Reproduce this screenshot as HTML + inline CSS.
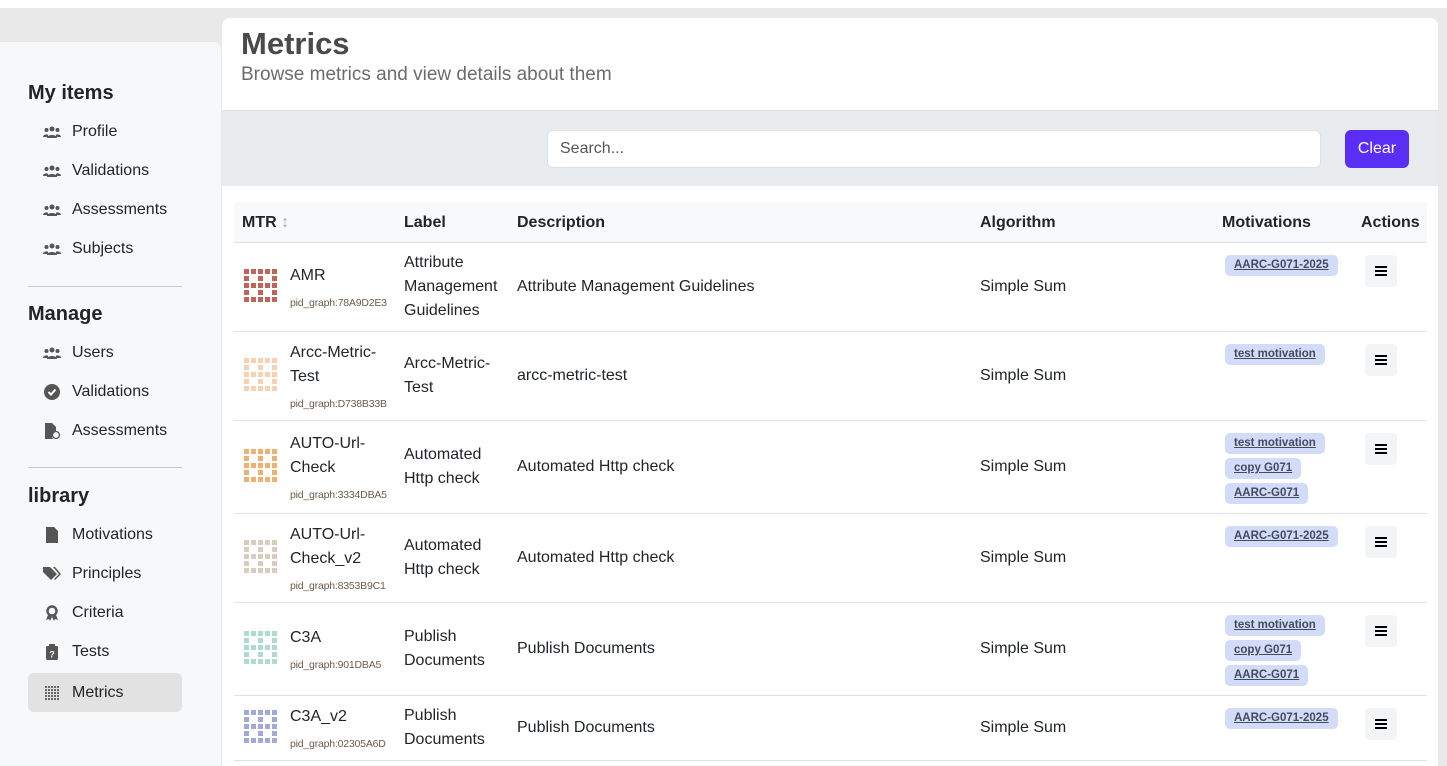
<!DOCTYPE html>
<html><head><meta charset="utf-8"><style>
*{box-sizing:border-box;margin:0;padding:0}
html{width:1447px;height:766px;overflow:hidden}
body{width:1447px;height:766px;overflow:hidden;background:#e9e9e9;font-family:"Liberation Sans","DejaVu Sans",sans-serif;color:#212529;position:relative}
.topw{position:absolute;left:0;top:0;width:1447px;height:8px;background:#fff}
.side{position:absolute;left:0;top:42px;width:221px;height:724px;background:#f7f8fa;border-top-right-radius:8px}
.side h3{position:absolute;left:28px;font-size:20px;font-weight:bold;color:#212529}
.si{position:absolute;left:28px;width:154px;height:39px;display:flex;align-items:center;font-size:16px;color:#212529}
.si .ic{width:44px;display:flex;justify-content:center;padding-left:4px}
.si.act{background:#e2e2e2;border-radius:6px}
.hr{position:absolute;left:28px;width:154px;height:1px;background:#c8c8c8}
.main{position:absolute;left:222px;top:18px;width:1216px;height:748px;background:#fff;border-top-left-radius:8px;border-top-right-radius:8px;overflow:hidden}
.h1{position:absolute;left:19px;top:8px;font-size:31px;font-weight:bold;color:#4a4a4a}
.sub{position:absolute;left:19px;top:46px;font-size:19px;color:#6c6c6c;font-weight:300}
.band{position:absolute;left:0;top:92px;width:1216px;height:76px;background:#e9ecef;border-top:1px solid #dcdfe3}
.search{position:absolute;left:325px;top:19px;width:774px;height:38px;background:#fff;border:1px solid #dee2e6;border-radius:6px;font-size:16px;color:#555;padding:9px 12px}
.clear{position:absolute;left:1123px;top:19px;width:64px;height:38px;background:#5b2ef5;border-radius:6px;color:#fff;font-size:16px;text-align:center;line-height:38px}
.thead{position:absolute;left:12px;top:184px;width:1193px;height:41px;background:#f8f9fa;border-bottom:1px solid #dee2e6;font-weight:bold;font-size:16px}
.thead span{position:absolute;top:12px}
.row{position:absolute;left:12px;width:1193px;border-bottom:1px solid #dee2e6;font-size:16px}
.c{position:absolute;top:0;height:100%;display:flex;align-items:center;line-height:24px}
.nm{left:8px;width:160px}
.nm svg{margin-right:10px;flex:none;margin-left:2px}
.pid{font-size:10.5px;color:#6c5a4a;line-height:14px;margin-top:8px;display:block;letter-spacing:-0.2px}
.lb{left:170px;width:105px}
.ds{left:283px}
.al{left:746px}
.mo{left:991px;top:12px;height:auto;flex-direction:column;align-items:flex-start;display:flex}
.bd{background:#d2dcf8;border-radius:5px;font-size:11.5px;font-weight:bold;color:#444b5e;text-decoration:underline;padding:2px 9px;line-height:17px;margin-bottom:4px}
.ac{position:absolute;left:1131px;top:12px;width:32px;height:32px;background:#f3f4f6;border-radius:4px;display:flex;align-items:center;justify-content:center}
</style></head><body>
<div class="topw"></div>
<div class="side">
<h3 style="top:40px">My items</h3>
<div class="si" style="top:70px"><span class="ic"><svg width="18" height="12" viewBox="0 0 18 12" fill="#555"><circle cx="9" cy="3" r="2.5"/><circle cx="3.5" cy="4" r="2"/><circle cx="14.5" cy="4" r="2"/><path d="M4 12c0-4 10-4 10 0z M0 11c0-3 5-3 5-2v2z M13 9c0-1 5-1 5 2h-5z"/></svg></span>Profile</div>
<div class="si" style="top:109px"><span class="ic"><svg width="18" height="12" viewBox="0 0 18 12" fill="#555"><circle cx="9" cy="3" r="2.5"/><circle cx="3.5" cy="4" r="2"/><circle cx="14.5" cy="4" r="2"/><path d="M4 12c0-4 10-4 10 0z M0 11c0-3 5-3 5-2v2z M13 9c0-1 5-1 5 2h-5z"/></svg></span>Validations</div>
<div class="si" style="top:148px"><span class="ic"><svg width="18" height="12" viewBox="0 0 18 12" fill="#555"><circle cx="9" cy="3" r="2.5"/><circle cx="3.5" cy="4" r="2"/><circle cx="14.5" cy="4" r="2"/><path d="M4 12c0-4 10-4 10 0z M0 11c0-3 5-3 5-2v2z M13 9c0-1 5-1 5 2h-5z"/></svg></span>Assessments</div>
<div class="si" style="top:187px"><span class="ic"><svg width="18" height="12" viewBox="0 0 18 12" fill="#555"><circle cx="9" cy="3" r="2.5"/><circle cx="3.5" cy="4" r="2"/><circle cx="14.5" cy="4" r="2"/><path d="M4 12c0-4 10-4 10 0z M0 11c0-3 5-3 5-2v2z M13 9c0-1 5-1 5 2h-5z"/></svg></span>Subjects</div>
<div class="hr" style="top:244px"></div>
<h3 style="top:261px">Manage</h3>
<div class="si" style="top:291px"><span class="ic"><svg width="18" height="12" viewBox="0 0 18 12" fill="#555"><circle cx="9" cy="3" r="2.5"/><circle cx="3.5" cy="4" r="2"/><circle cx="14.5" cy="4" r="2"/><path d="M4 12c0-4 10-4 10 0z M0 11c0-3 5-3 5-2v2z M13 9c0-1 5-1 5 2h-5z"/></svg></span>Users</div>
<div class="si" style="top:330px"><span class="ic"><svg width="16" height="16" viewBox="0 0 16 16"><circle cx="8" cy="8" r="8" fill="#555"/><path d="M4.5 8l2.5 2.5 4.5-5" stroke="#fff" stroke-width="2" fill="none"/></svg></span>Validations</div>
<div class="si" style="top:369px"><span class="ic"><svg width="16" height="16" viewBox="0 0 16 16" fill="#555"><path d="M1 0h7l4 4v4a5 5 0 0 0-3 8H1z"/><circle cx="12" cy="12" r="3.5" fill="none" stroke="#555" stroke-width="1.3"/></svg></span>Assessments</div>
<div class="hr" style="top:425px"></div>
<h3 style="top:443px">library</h3>
<div class="si" style="top:473px"><span class="ic"><svg width="12" height="16" viewBox="0 0 12 16" fill="#555"><path d="M0 0h8l4 4v12H0z"/></svg></span>Motivations</div>
<div class="si" style="top:512px"><span class="ic"><svg width="18" height="14" viewBox="0 0 18 14" fill="#555"><path d="M0 0h7l7 7-6 6-8-8z M10 0h2l6 7-6 6-1-1 5-5z"/></svg></span>Principles</div>
<div class="si" style="top:551px"><span class="ic"><svg width="14" height="16" viewBox="0 0 14 16"><circle cx="7" cy="6" r="4.5" fill="none" stroke="#555" stroke-width="2.4"/><path d="M3 10l-2 5 3-1 1 2 2-4z M11 10l2 5-3-1-1 2-2-4z" fill="#555"/></svg></span>Criteria</div>
<div class="si" style="top:590px"><span class="ic"><svg width="12" height="16" viewBox="0 0 12 16"><rect x="0" y="2" width="12" height="14" rx="1.5" fill="#555"/><rect x="3" y="0" width="6" height="3" fill="#555"/><text x="6" y="13.5" font-size="9" fill="#fff" text-anchor="middle" font-weight="bold" font-family="Liberation Sans">?</text></svg></span>Tests</div>
<div class="si act" style="top:631px"><span class="ic"><svg width="14" height="14" viewBox="0 0 14 14" fill="#666"><g id="g"><rect x="0" y="0" width="2" height="2"/><rect x="3" y="0" width="2" height="2"/><rect x="6" y="0" width="2" height="2"/><rect x="9" y="0" width="2" height="2"/><rect x="12" y="0" width="2" height="2"/></g><use href="#g" y="3"/><use href="#g" y="6"/><use href="#g" y="9"/><use href="#g" y="12"/></svg></span>Metrics</div>
</div>

<div class="main">
<div class="h1">Metrics</div>
<div class="sub">Browse metrics and view details about them</div>
<div class="band"><div class="search">Search...</div><div class="clear">Clear</div></div>
<div class="thead"><span style="left:8px">MTR <span style="position:static;color:#aaa;font-weight:normal">↕</span></span><span style="left:170px">Label</span><span style="left:283px">Description</span><span style="left:746px">Algorithm</span><span style="left:988px">Motivations</span><span style="left:1127px">Actions</span></div>

<svg width="0" height="0" style="position:absolute"><defs><g id="ic"><rect x="0" y="0" width="5" height="5"/><rect x="7" y="0" width="5" height="5"/><rect x="14" y="0" width="5" height="5"/><rect x="21" y="0" width="5" height="5"/><rect x="28" y="0" width="5" height="5"/><rect x="0" y="7" width="5" height="5"/><rect x="14" y="7" width="5" height="5"/><rect x="28" y="7" width="5" height="5"/><rect x="0" y="14" width="5" height="5"/><rect x="7" y="14" width="5" height="5"/><rect x="14" y="14" width="5" height="5"/><rect x="21" y="14" width="5" height="5"/><rect x="28" y="14" width="5" height="5"/><rect x="0" y="21" width="5" height="5"/><rect x="14" y="21" width="5" height="5"/><rect x="28" y="21" width="5" height="5"/><rect x="0" y="28" width="5" height="5"/><rect x="7" y="28" width="5" height="5"/><rect x="14" y="28" width="5" height="5"/><rect x="21" y="28" width="5" height="5"/><rect x="28" y="28" width="5" height="5"/></g><g id="hb"><rect x="0" y="0" width="12" height="2"/><rect x="0" y="4" width="12" height="2"/><rect x="0" y="8" width="12" height="2"/></g></defs></svg>

<div class="row" style="top:225px;height:89px">
<div class="c nm"><svg width="36" height="36" fill="#c0645a"><use href="#ic"/></svg><div>AMR<span class="pid">pid_graph:78A9D2E3</span></div></div>
<div class="c lb">Attribute Management Guidelines</div><div class="c ds">Attribute Management Guidelines</div><div class="c al">Simple Sum</div>
<div class="c mo"><span class="bd">AARC-G071-2025</span></div><div class="ac"><svg width="12" height="10"><use href="#hb"/></svg></div></div>

<div class="row" style="top:314px;height:89px">
<div class="c nm"><svg width="36" height="36" fill="#f8d1b3"><use href="#ic"/></svg><div>Arcc-Metric-<br>Test<span class="pid">pid_graph:D738B33B</span></div></div>
<div class="c lb">Arcc-Metric-<br>Test</div><div class="c ds">arcc-metric-test</div><div class="c al">Simple Sum</div>
<div class="c mo"><span class="bd">test motivation</span></div><div class="ac"><svg width="12" height="10"><use href="#hb"/></svg></div></div>

<div class="row" style="top:403px;height:93px">
<div class="c nm"><svg width="36" height="36" fill="#efb070"><use href="#ic"/></svg><div>AUTO-Url-<br>Check<span class="pid">pid_graph:3334DBA5</span></div></div>
<div class="c lb">Automated Http check</div><div class="c ds">Automated Http check</div><div class="c al">Simple Sum</div>
<div class="c mo"><span class="bd">test motivation</span><span class="bd">copy G071</span><span class="bd">AARC-G071</span></div><div class="ac"><svg width="12" height="10"><use href="#hb"/></svg></div></div>

<div class="row" style="top:496px;height:89px">
<div class="c nm"><svg width="36" height="36" fill="#d8cdbf"><use href="#ic"/></svg><div>AUTO-Url-<br>Check_v2<span class="pid">pid_graph:8353B9C1</span></div></div>
<div class="c lb">Automated Http check</div><div class="c ds">Automated Http check</div><div class="c al">Simple Sum</div>
<div class="c mo"><span class="bd">AARC-G071-2025</span></div><div class="ac"><svg width="12" height="10"><use href="#hb"/></svg></div></div>

<div class="row" style="top:585px;height:93px">
<div class="c nm"><svg width="36" height="36" fill="#acdccf"><use href="#ic"/></svg><div>C3A<span class="pid">pid_graph:901DBA5</span></div></div>
<div class="c lb">Publish Documents</div><div class="c ds">Publish Documents</div><div class="c al">Simple Sum</div>
<div class="c mo"><span class="bd">test motivation</span><span class="bd">copy G071</span><span class="bd">AARC-G071</span></div><div class="ac"><svg width="12" height="10"><use href="#hb"/></svg></div></div>

<div class="row" style="top:678px;height:65px">
<div class="c nm"><svg width="36" height="36" fill="#a2a9d6"><use href="#ic"/></svg><div>C3A_v2<span class="pid">pid_graph:02305A6D</span></div></div>
<div class="c lb">Publish Documents</div><div class="c ds">Publish Documents</div><div class="c al">Simple Sum</div>
<div class="c mo"><span class="bd">AARC-G071-2025</span></div><div class="ac"><svg width="12" height="10"><use href="#hb"/></svg></div></div>
</div>
</body></html>
